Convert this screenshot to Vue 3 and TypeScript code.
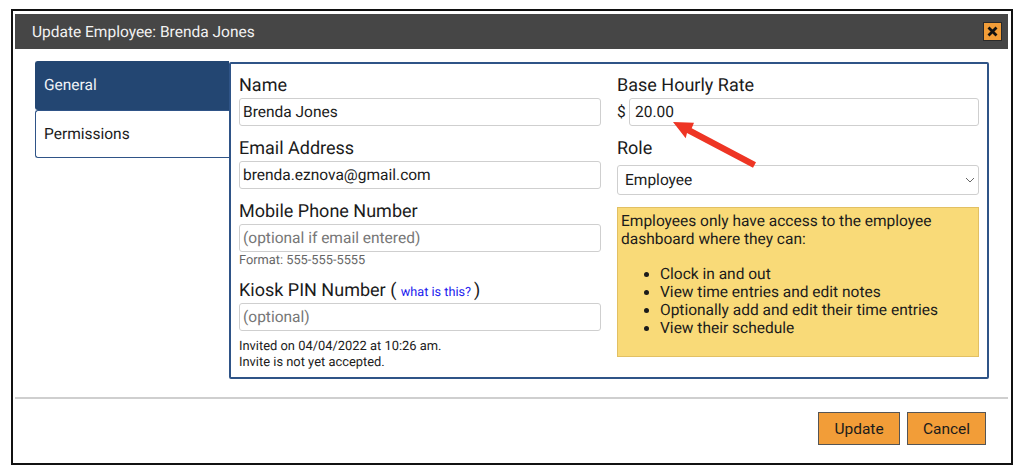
<script setup lang="ts">
const duties: string[] = [
  'Clock in and out',
  'View time entries and edit notes',
  'Optionally add and edit their time entries',
  'View their schedule',
]
</script>

<template>
  <div class="page">
    <div class="dialog">
      <header class="titlebar">
        <span class="title">Update Employee: Brenda Jones</span>
        <button class="close" type="button" aria-label="Close">
          <svg width="11" height="11" viewBox="0 0 11 11">
            <path d="M1.5 1.5 L9.5 9.5 M9.5 1.5 L1.5 9.5" stroke="#111" stroke-width="2.8" fill="none" />
          </svg>
        </button>
      </header>

      <div class="body">
        <nav class="tabs">
          <div class="tab active">General</div>
          <div class="tab">Permissions</div>
        </nav>
        <section class="panel">
          <div class="col">
            <label class="lbl">Name</label>
            <div class="input">Brenda Jones</div>
            <label class="lbl next">Email Address</label>
            <div class="input">brenda.eznova@gmail.com</div>
            <label class="lbl next">Mobile Phone Number</label>
            <div class="input ph">(optional if email entered)</div>
            <div class="hint">Format: 555-555-5555</div>
            <label class="lbl kiosk">Kiosk PIN Number ( <a class="link">what is this?</a>)</label>
            <div class="input ph">(optional)</div>
            <div class="note">Invited on 04/04/2022 at 10:26 am.<br />Invite is not yet accepted.</div>
          </div>
          <div class="col">
            <label class="lbl">Base Hourly Rate</label>
            <div class="rate">
              <span class="dollar">$</span>
              <div class="input grow">20.00</div>
            </div>
            <label class="lbl next">Role</label>
            <div class="select">
              <span>Employee</span>
              <svg width="10" height="6" viewBox="0 0 10 6">
                <path d="M1 1 L5 5 L9 1" stroke="#666" stroke-width="1" fill="none" />
              </svg>
            </div>
            <div class="info">
              <p>Employees only have access to the employee dashboard where they can:</p>
              <ul>
                <li v-for="d in duties" :key="d">{{ d }}</li>
              </ul>
            </div>
          </div>
          <svg class="arrow" width="90" height="50" viewBox="0 0 90 50">
            <path d="M0 0 L21 0.700 L18.700 6.300 L83 40.300 L80 45.700 L14 11 L12.700 16.300 Z" fill="#ee3524" />
          </svg>
        </section>
      </div>

      <div class="rule"></div>
      <footer class="actions">
        <button class="btn update" type="button">Update</button>
        <button class="btn cancel" type="button">Cancel</button>
      </footer>
    </div>
  </div>
</template>

<style>
html, body { margin: 0; background: #fff; }
</style>

<style scoped>
.page {
  width: 1024px;
  height: 473px;
  padding: 9px 0 0 11px;
  box-sizing: border-box;
  font-family: Roboto, "Liberation Sans", sans-serif;
  color: #1b1b1b;
  overflow: hidden;
  text-rendering: geometricPrecision;
}
.dialog {
  width: 1002px;
  height: 456px;
  border: 2px solid #111;
  box-sizing: border-box;
  padding: 3px 3px 0 2px;
}
.titlebar {
  height: 35px;
  background: #464646;
  color: #f2f2f2;
  display: flex;
  align-items: center;
  justify-content: space-between;
  padding: 0 6px 0 17px;
  font-size: 15.5px;
}
.close {
  width: 19px;
  height: 19px;
  padding: 0;
  background: #f29d38;
  border: 1px solid #2a2a2a;
  display: flex;
  align-items: center;
  justify-content: center;
}
.body {
  display: flex;
  padding: 12px 20px 0 20px;
}
.tabs {
  width: 194px;
  flex: none;
  font-size: 15.5px;
}
.tab {
  height: 48px;
  box-sizing: border-box;
  display: flex;
  align-items: center;
  padding: 0 0 0 8px;
  border: 1px solid #2f5487;
  border-right: 0;
  border-radius: 3px 0 0 3px;
  background: #fff;
}
.tab.active {
  background: #234672;
  color: #f0f3f7;
  border-color: #234672;
  height: 49px;
  padding-bottom: 2px;
}
.panel {
  position: relative;
  width: 760px;
  height: 317px;
  margin-top: 1px;
  box-sizing: border-box;
  border: 2px solid #2f5487;
  border-radius: 2px;
  padding: 9px 9px 0 8px;
  display: grid;
  grid-template-columns: 362px 362px;
  column-gap: 16px;
}
.col { display: flex; flex-direction: column; min-width: 0; }
.lbl {
  display: block;
  font-size: 18px;
  line-height: 26px;
  height: 24px;
  margin-bottom: 1px;
}
.lbl.next {
  margin-top: 10px;
  height: 25px;
  margin-bottom: 0;
}
.lbl.kiosk { margin-top: 10px; }
.link { font-size: 12.7px; color: #1a1aee; margin-right: 3px; }
.input {
  height: 28px;
  box-sizing: border-box;
  border: 1px solid #cfcfcf;
  border-radius: 3px;
  padding: 0 3px;
  font-size: 15.5px;
  line-height: 26px;
  background: #fff;
}
.ph { color: #777; }
.hint { font-size: 12.8px; line-height: 18px; height: 16px; color: #666; }
.note { font-size: 12.9px; line-height: 16px; margin-top: 8px; }
.rate { display: flex; align-items: center; }
.dollar { width: 12px; font-size: 15.5px; }
.grow { flex: 1; padding: 0 5px; }
.select {
  height: 30px;
  margin-top: 4px;
  box-sizing: border-box;
  border: 1px solid #cfcfcf;
  border-radius: 3px;
  padding: 0 3px 0 7px;
  font-size: 15.5px;
  display: flex;
  align-items: center;
  justify-content: space-between;
}
.info {
  margin-top: 12px;
  height: 150px;
  box-sizing: border-box;
  background: #f9da78;
  border: 1px solid #e2c063;
  padding: 4px 3px;
  font-size: 15.5px;
  line-height: 18.3px;
}
.info p { margin: 0; }
.info ul { margin: 16px 0 0; padding: 0 0 0 39px; }
.arrow { position: absolute; left: 442px; top: 58px; }
.rule {
  height: 2px;
  margin-top: 18px;
  background: #cfcfcf;
}
.actions {
  display: flex;
  justify-content: flex-end;
  gap: 7px;
  padding: 13px 22px 0 0;
}
.btn {
  height: 33px;
  background: #f29d38;
  border: 1px solid #555;
  font-family: inherit;
  font-size: 15.5px;
  color: #1b1b1b;
  padding: 0;
}
.update { width: 82px; }
.cancel { width: 79px; }
</style>
